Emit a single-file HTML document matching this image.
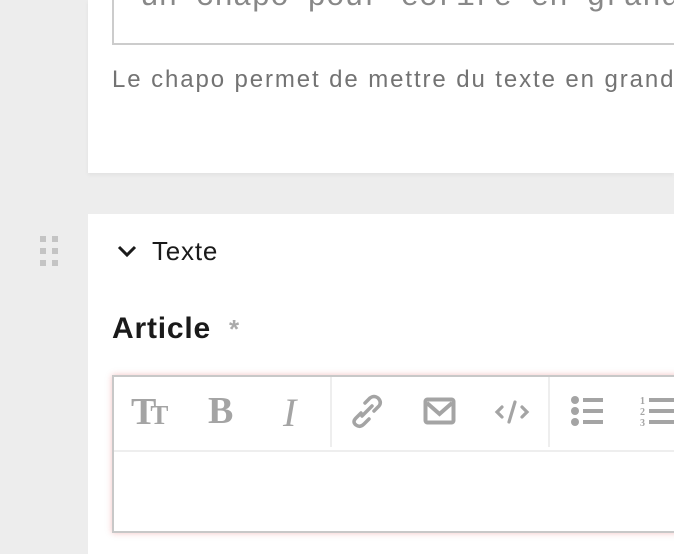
<!DOCTYPE html>
<html><head><style>
html,body{margin:0;padding:0;width:674px;height:554px;overflow:hidden;background:#ededed;font-family:"Liberation Sans",sans-serif;position:relative}
.card{position:absolute;left:88px;width:586px;background:#fff}
.abs{position:absolute}
.dot{position:absolute;width:6px;height:6px;background:#c4c4c4}
</style></head><body>
<div class="card" style="top:0;height:173px;box-shadow:0 2px 4px rgba(0,0,0,0.05)"></div>
<div class="abs" style="left:112px;top:-20px;width:580px;height:63px;border:2px solid #ccc;border-top:none;background:#fff;overflow:hidden">
<div class="abs" style="left:26px;top:0px;font-family:'Liberation Mono',monospace;font-size:31px;color:#888;white-space:nowrap">un chapo pour écrire en grand</div></div>
<div class="abs" style="left:112px;top:66px;font-size:24px;letter-spacing:1.9px;color:#737373;white-space:nowrap">Le chapo permet de mettre du texte en grand</div>

<div class="card" style="top:214px;height:340px"></div>
<div class="dot" style="left:40px;top:236px"></div><div class="dot" style="left:52px;top:236px"></div>
<div class="dot" style="left:40px;top:248px"></div><div class="dot" style="left:52px;top:248px"></div>
<div class="dot" style="left:40px;top:260px"></div><div class="dot" style="left:52px;top:260px"></div>
<svg class="abs" style="left:116px;top:243px" width="22" height="16"><path d="M3 4 L11 12 L19 4" fill="none" stroke="#1a1a1a" stroke-width="3"/></svg>
<div class="abs" style="left:152px;top:236px;font-size:26px;letter-spacing:0.8px;color:#1a1a1a">Texte</div>
<div class="abs" style="left:112px;top:312px;font-size:30px;letter-spacing:0.8px;font-weight:bold;color:#1a1a1a">Article</div>
<div class="abs" style="left:229px;top:314px;font-size:26px;font-weight:bold;color:#aaa">*</div>

<div class="abs" style="left:112px;top:375px;width:600px;height:154px;border:2px solid #c8c8c8;background:#fff;box-shadow:0 0 6px rgba(220,80,80,0.35)"></div>
<div class="abs" style="left:114px;top:450px;width:600px;height:2px;background:#eee"></div>
<div class="abs" style="left:330px;top:377px;width:2px;height:70px;background:#eee"></div>
<div class="abs" style="left:548px;top:377px;width:2px;height:70px;background:#eee"></div>
<div class="abs" style="left:131px;top:390px;font-family:'Liberation Serif',serif;font-weight:bold;color:#a4a4a4;font-size:38px;letter-spacing:-6px">T<span style="font-size:27px">T</span></div>
<div class="abs" style="left:208px;top:389px;font-family:'Liberation Serif',serif;font-weight:bold;color:#a4a4a4;font-size:38px">B</div>
<div class="abs" style="left:283px;top:389px;font-family:'Liberation Serif',serif;font-style:italic;color:#a4a4a4;font-size:40px">I</div>
<svg class="abs" style="left:348px;top:394px" width="38" height="36" fill="none" stroke="#a4a4a4" stroke-width="3.5" stroke-linecap="round"><path d="M17 9 L22 4 Q26 1 30 4 Q34 8 31 12 L26 17"/><path d="M13 19 L8 24 Q4 28 8 31 Q12 34 16 30 L21 25"/><path d="M14 22 L24 12"/></svg>
<svg class="abs" style="left:423px;top:397px" width="36" height="30"><rect x="2.5" y="2.5" width="28" height="23" rx="2" fill="none" stroke="#a4a4a4" stroke-width="4"/><path d="M4 6 L16.5 17 L29 6" fill="none" stroke="#a4a4a4" stroke-width="4"/></svg>
<svg class="abs" style="left:494px;top:398px" width="36" height="28" fill="none" stroke="#a4a4a4" stroke-width="3.2" stroke-linecap="round"><path d="M8 9 L3 14 L8 19"/><path d="M28 9 L33 14 L28 19"/><path d="M21 4 L15 24"/></svg>
<svg class="abs" style="left:568px;top:394px" width="40" height="36" fill="#a4a4a4"><circle cx="7" cy="6" r="4"/><circle cx="7" cy="17" r="4"/><circle cx="7" cy="28" r="4"/><rect x="15" y="4" width="20" height="4"/><rect x="15" y="15" width="20" height="4"/><rect x="15" y="26" width="20" height="4"/></svg>
<svg class="abs" style="left:640px;top:394px" width="40" height="36" fill="#a4a4a4"><text x="0" y="10" font-size="10" font-family="Liberation Serif" font-weight="bold">1</text><text x="0" y="21" font-size="10" font-family="Liberation Serif" font-weight="bold">2</text><text x="0" y="32" font-size="10" font-family="Liberation Serif" font-weight="bold">3</text><rect x="9" y="4" width="30" height="4"/><rect x="9" y="15" width="30" height="4"/><rect x="9" y="26" width="30" height="4"/></svg>
</body></html>
